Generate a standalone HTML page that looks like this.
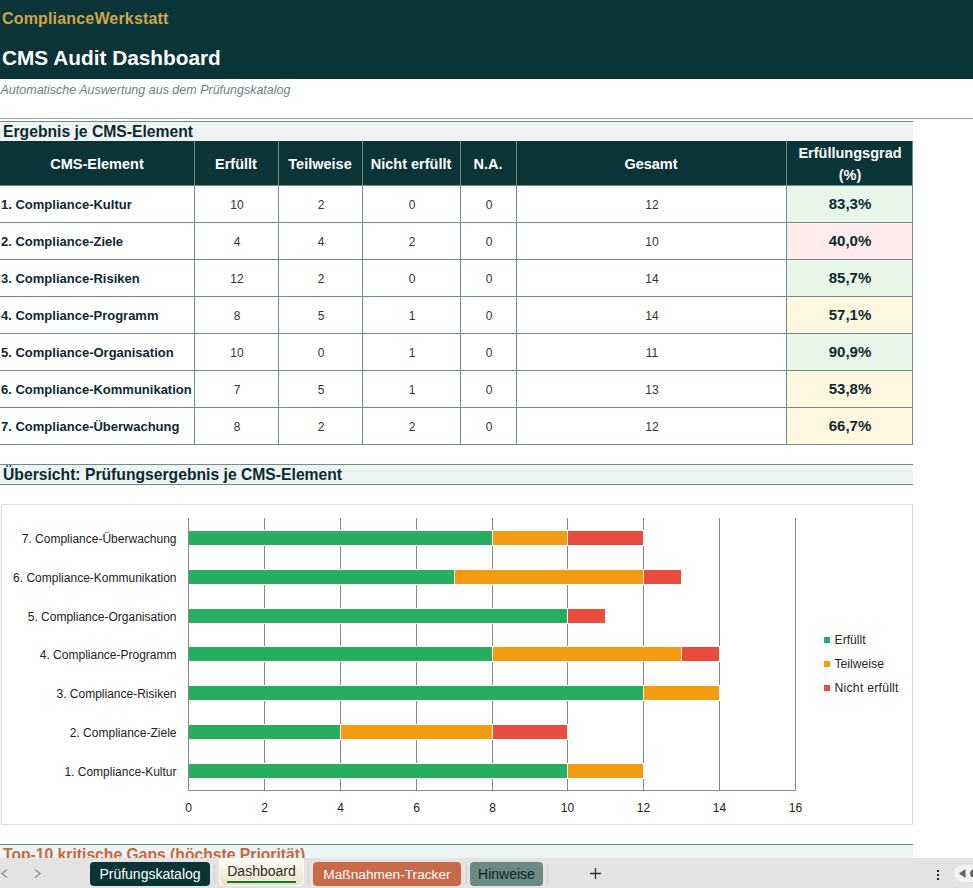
<!DOCTYPE html>
<html><head><meta charset="utf-8"><style>
html,body{margin:0;padding:0;width:973px;height:888px;overflow:hidden;background:#fff;font-family:"Liberation Sans", sans-serif;}
.t{position:absolute;white-space:nowrap;line-height:1;}
.r{position:absolute;}
</style></head><body>
<div class="r" style="left:0px;top:0px;width:973px;height:79px;background:#0a3437"></div><div class="t" style="left:2px;top:11px;font-size:16px;font-weight:bold;color:#cfa64a;letter-spacing:0.17px">ComplianceWerkstatt</div><div class="t" style="left:2px;top:48px;font-size:20.8px;font-weight:bold;color:#fff">CMS Audit Dashboard</div><div class="t" style="left:0.5px;top:84px;font-size:12.5px;font-style:italic;color:#6f8083">Automatische Auswertung aus dem Prüfungskatalog</div><div class="r" style="left:0px;top:118px;width:973px;height:1px;background:#a0a0a0"></div><div class="r" style="left:0px;top:121px;width:913px;height:1px;background:#6f8e88"></div><div class="r" style="left:0px;top:122px;width:913px;height:19px;background:#eef4f4"></div><div class="t" style="left:3px;top:124px;font-size:15.7px;font-weight:bold;color:#0b2a30">Ergebnis je CMS-Element</div><div class="r" style="left:0px;top:141px;width:913px;height:44px;background:#0a3437"></div><div class="t" style="left:0px;top:157px;font-size:14.5px;width:194px;text-align:center;font-weight:bold;color:#fff">CMS-Element</div><div class="t" style="left:194px;top:157px;font-size:14.5px;width:84px;text-align:center;font-weight:bold;color:#fff">Erfüllt</div><div class="t" style="left:278px;top:157px;font-size:14.5px;width:84px;text-align:center;font-weight:bold;color:#fff">Teilweise</div><div class="t" style="left:362px;top:157px;font-size:14.5px;width:98px;text-align:center;font-weight:bold;color:#fff">Nicht erfüllt</div><div class="t" style="left:460px;top:157px;font-size:14.5px;width:56px;text-align:center;font-weight:bold;color:#fff">N.A.</div><div class="t" style="left:516px;top:157px;font-size:14.5px;width:270px;text-align:center;font-weight:bold;color:#fff">Gesamt</div><div class="t" style="left:787px;top:146px;font-size:14.5px;width:126px;text-align:center;font-weight:bold;color:#fff">Erfüllungsgrad</div><div class="t" style="left:787px;top:168px;font-size:14.5px;width:126px;text-align:center;font-weight:bold;color:#fff">(%)</div><div class="r" style="left:786px;top:185px;width:126px;height:37px;background:#e8f5e9"></div><div class="t" style="left:1px;top:198px;font-size:13px;font-weight:bold;color:#0b2a30">1. Compliance-Kultur</div><div class="t" style="left:195px;top:199px;font-size:12px;width:84px;text-align:center;color:#333">10</div><div class="t" style="left:279px;top:199px;font-size:12px;width:84px;text-align:center;color:#333">2</div><div class="t" style="left:363px;top:199px;font-size:12px;width:98px;text-align:center;color:#333">0</div><div class="t" style="left:461px;top:199px;font-size:12px;width:56px;text-align:center;color:#333">0</div><div class="t" style="left:517px;top:199px;font-size:12px;width:270px;text-align:center;color:#333">12</div><div class="t" style="left:787px;top:196px;font-size:15px;width:126px;text-align:center;font-weight:bold;color:#0b2a30">83,3%</div><div class="r" style="left:786px;top:222px;width:126px;height:37px;background:#ffebee"></div><div class="t" style="left:1px;top:235px;font-size:13px;font-weight:bold;color:#0b2a30">2. Compliance-Ziele</div><div class="t" style="left:195px;top:236px;font-size:12px;width:84px;text-align:center;color:#333">4</div><div class="t" style="left:279px;top:236px;font-size:12px;width:84px;text-align:center;color:#333">4</div><div class="t" style="left:363px;top:236px;font-size:12px;width:98px;text-align:center;color:#333">2</div><div class="t" style="left:461px;top:236px;font-size:12px;width:56px;text-align:center;color:#333">0</div><div class="t" style="left:517px;top:236px;font-size:12px;width:270px;text-align:center;color:#333">10</div><div class="t" style="left:787px;top:233px;font-size:15px;width:126px;text-align:center;font-weight:bold;color:#0b2a30">40,0%</div><div class="r" style="left:786px;top:259px;width:126px;height:37px;background:#e8f5e9"></div><div class="t" style="left:1px;top:272px;font-size:13px;font-weight:bold;color:#0b2a30">3. Compliance-Risiken</div><div class="t" style="left:195px;top:273px;font-size:12px;width:84px;text-align:center;color:#333">12</div><div class="t" style="left:279px;top:273px;font-size:12px;width:84px;text-align:center;color:#333">2</div><div class="t" style="left:363px;top:273px;font-size:12px;width:98px;text-align:center;color:#333">0</div><div class="t" style="left:461px;top:273px;font-size:12px;width:56px;text-align:center;color:#333">0</div><div class="t" style="left:517px;top:273px;font-size:12px;width:270px;text-align:center;color:#333">14</div><div class="t" style="left:787px;top:270px;font-size:15px;width:126px;text-align:center;font-weight:bold;color:#0b2a30">85,7%</div><div class="r" style="left:786px;top:296px;width:126px;height:37px;background:#fff8e1"></div><div class="t" style="left:1px;top:309px;font-size:13px;font-weight:bold;color:#0b2a30">4. Compliance-Programm</div><div class="t" style="left:195px;top:310px;font-size:12px;width:84px;text-align:center;color:#333">8</div><div class="t" style="left:279px;top:310px;font-size:12px;width:84px;text-align:center;color:#333">5</div><div class="t" style="left:363px;top:310px;font-size:12px;width:98px;text-align:center;color:#333">1</div><div class="t" style="left:461px;top:310px;font-size:12px;width:56px;text-align:center;color:#333">0</div><div class="t" style="left:517px;top:310px;font-size:12px;width:270px;text-align:center;color:#333">14</div><div class="t" style="left:787px;top:307px;font-size:15px;width:126px;text-align:center;font-weight:bold;color:#0b2a30">57,1%</div><div class="r" style="left:786px;top:333px;width:126px;height:37px;background:#e8f5e9"></div><div class="t" style="left:1px;top:346px;font-size:13px;font-weight:bold;color:#0b2a30">5. Compliance-Organisation</div><div class="t" style="left:195px;top:347px;font-size:12px;width:84px;text-align:center;color:#333">10</div><div class="t" style="left:279px;top:347px;font-size:12px;width:84px;text-align:center;color:#333">0</div><div class="t" style="left:363px;top:347px;font-size:12px;width:98px;text-align:center;color:#333">1</div><div class="t" style="left:461px;top:347px;font-size:12px;width:56px;text-align:center;color:#333">0</div><div class="t" style="left:517px;top:347px;font-size:12px;width:270px;text-align:center;color:#333">11</div><div class="t" style="left:787px;top:344px;font-size:15px;width:126px;text-align:center;font-weight:bold;color:#0b2a30">90,9%</div><div class="r" style="left:786px;top:370px;width:126px;height:37px;background:#fff8e1"></div><div class="t" style="left:1px;top:383px;font-size:13px;font-weight:bold;color:#0b2a30">6. Compliance-Kommunikation</div><div class="t" style="left:195px;top:384px;font-size:12px;width:84px;text-align:center;color:#333">7</div><div class="t" style="left:279px;top:384px;font-size:12px;width:84px;text-align:center;color:#333">5</div><div class="t" style="left:363px;top:384px;font-size:12px;width:98px;text-align:center;color:#333">1</div><div class="t" style="left:461px;top:384px;font-size:12px;width:56px;text-align:center;color:#333">0</div><div class="t" style="left:517px;top:384px;font-size:12px;width:270px;text-align:center;color:#333">13</div><div class="t" style="left:787px;top:381px;font-size:15px;width:126px;text-align:center;font-weight:bold;color:#0b2a30">53,8%</div><div class="r" style="left:786px;top:407px;width:126px;height:37px;background:#fff8e1"></div><div class="t" style="left:1px;top:420px;font-size:13px;font-weight:bold;color:#0b2a30">7. Compliance-Überwachung</div><div class="t" style="left:195px;top:421px;font-size:12px;width:84px;text-align:center;color:#333">8</div><div class="t" style="left:279px;top:421px;font-size:12px;width:84px;text-align:center;color:#333">2</div><div class="t" style="left:363px;top:421px;font-size:12px;width:98px;text-align:center;color:#333">2</div><div class="t" style="left:461px;top:421px;font-size:12px;width:56px;text-align:center;color:#333">0</div><div class="t" style="left:517px;top:421px;font-size:12px;width:270px;text-align:center;color:#333">12</div><div class="t" style="left:787px;top:418px;font-size:15px;width:126px;text-align:center;font-weight:bold;color:#0b2a30">66,7%</div><div class="r" style="left:0px;top:185px;width:913px;height:1px;background:#6f8e88"></div><div class="r" style="left:0px;top:222px;width:913px;height:1px;background:#6f8e88"></div><div class="r" style="left:0px;top:259px;width:913px;height:1px;background:#6f8e88"></div><div class="r" style="left:0px;top:296px;width:913px;height:1px;background:#6f8e88"></div><div class="r" style="left:0px;top:333px;width:913px;height:1px;background:#6f8e88"></div><div class="r" style="left:0px;top:370px;width:913px;height:1px;background:#6f8e88"></div><div class="r" style="left:0px;top:407px;width:913px;height:1px;background:#6f8e88"></div><div class="r" style="left:0px;top:444px;width:913px;height:1px;background:#6f8e88"></div><div class="r" style="left:194px;top:141px;width:1px;height:304px;background:#6f8e88"></div><div class="r" style="left:278px;top:141px;width:1px;height:304px;background:#6f8e88"></div><div class="r" style="left:362px;top:141px;width:1px;height:304px;background:#6f8e88"></div><div class="r" style="left:460px;top:141px;width:1px;height:304px;background:#6f8e88"></div><div class="r" style="left:516px;top:141px;width:1px;height:304px;background:#6f8e88"></div><div class="r" style="left:786px;top:141px;width:1px;height:304px;background:#6f8e88"></div><div class="r" style="left:912px;top:141px;width:1px;height:304px;background:#6f8e88"></div><div class="r" style="left:0px;top:464px;width:913px;height:1px;background:#6f8e88"></div><div class="r" style="left:0px;top:465px;width:913px;height:19px;background:#eef4f4"></div><div class="r" style="left:0px;top:484px;width:913px;height:1px;background:#6f8e88"></div><div class="t" style="left:3px;top:467px;font-size:15.7px;font-weight:bold;color:#0b2a30">Übersicht: Prüfungsergebnis je CMS-Element</div><div class="r" style="left:1px;top:504px;width:912px;height:321px;border:1px solid #d9d9d9;box-sizing:border-box;background:#fff"></div><div class="r" style="left:264px;top:518px;width:1px;height:273px;background:#888"></div><div class="r" style="left:340px;top:518px;width:1px;height:273px;background:#888"></div><div class="r" style="left:416px;top:518px;width:1px;height:273px;background:#888"></div><div class="r" style="left:492px;top:518px;width:1px;height:273px;background:#888"></div><div class="r" style="left:567px;top:518px;width:1px;height:273px;background:#888"></div><div class="r" style="left:643px;top:518px;width:1px;height:273px;background:#888"></div><div class="r" style="left:719px;top:518px;width:1px;height:273px;background:#888"></div><div class="r" style="left:795px;top:518px;width:1px;height:273px;background:#888"></div><div class="r" style="left:188px;top:530px;width:305px;height:16px;background:#fff"></div><div class="r" style="left:189px;top:531px;width:303px;height:14px;background:#27ae60"></div><div class="r" style="left:492px;top:530px;width:76px;height:16px;background:#fff"></div><div class="r" style="left:493px;top:531px;width:74px;height:14px;background:#f39c12"></div><div class="r" style="left:567px;top:530px;width:77px;height:16px;background:#fff"></div><div class="r" style="left:568px;top:531px;width:75px;height:14px;background:#e74c3c"></div><div class="r" style="left:188px;top:569px;width:267px;height:16px;background:#fff"></div><div class="r" style="left:189px;top:570px;width:265px;height:14px;background:#27ae60"></div><div class="r" style="left:454px;top:569px;width:190px;height:16px;background:#fff"></div><div class="r" style="left:455px;top:570px;width:188px;height:14px;background:#f39c12"></div><div class="r" style="left:643px;top:569px;width:39px;height:16px;background:#fff"></div><div class="r" style="left:644px;top:570px;width:37px;height:14px;background:#e74c3c"></div><div class="r" style="left:188px;top:608px;width:380px;height:16px;background:#fff"></div><div class="r" style="left:189px;top:609px;width:378px;height:14px;background:#27ae60"></div><div class="r" style="left:567px;top:608px;width:39px;height:16px;background:#fff"></div><div class="r" style="left:568px;top:609px;width:37px;height:14px;background:#e74c3c"></div><div class="r" style="left:188px;top:646px;width:305px;height:16px;background:#fff"></div><div class="r" style="left:189px;top:647px;width:303px;height:14px;background:#27ae60"></div><div class="r" style="left:492px;top:646px;width:190px;height:16px;background:#fff"></div><div class="r" style="left:493px;top:647px;width:188px;height:14px;background:#f39c12"></div><div class="r" style="left:681px;top:646px;width:39px;height:16px;background:#fff"></div><div class="r" style="left:682px;top:647px;width:37px;height:14px;background:#e74c3c"></div><div class="r" style="left:188px;top:685px;width:456px;height:16px;background:#fff"></div><div class="r" style="left:189px;top:686px;width:454px;height:14px;background:#27ae60"></div><div class="r" style="left:643px;top:685px;width:77px;height:16px;background:#fff"></div><div class="r" style="left:644px;top:686px;width:75px;height:14px;background:#f39c12"></div><div class="r" style="left:188px;top:724px;width:153px;height:16px;background:#fff"></div><div class="r" style="left:189px;top:725px;width:151px;height:14px;background:#27ae60"></div><div class="r" style="left:340px;top:724px;width:153px;height:16px;background:#fff"></div><div class="r" style="left:341px;top:725px;width:151px;height:14px;background:#f39c12"></div><div class="r" style="left:492px;top:724px;width:76px;height:16px;background:#fff"></div><div class="r" style="left:493px;top:725px;width:74px;height:14px;background:#e74c3c"></div><div class="r" style="left:188px;top:763px;width:380px;height:16px;background:#fff"></div><div class="r" style="left:189px;top:764px;width:378px;height:14px;background:#27ae60"></div><div class="r" style="left:567px;top:763px;width:77px;height:16px;background:#fff"></div><div class="r" style="left:568px;top:764px;width:75px;height:14px;background:#f39c12"></div><div class="r" style="left:188px;top:518px;width:1px;height:273px;background:#888"></div><div class="r" style="left:188px;top:790px;width:608px;height:1px;background:#888"></div><div class="t" style="left:0px;top:533px;font-size:12px;width:176.5px;text-align:right;color:#222">7. Compliance-Überwachung</div><div class="t" style="left:0px;top:572px;font-size:12px;width:176.5px;text-align:right;color:#222">6. Compliance-Kommunikation</div><div class="t" style="left:0px;top:611px;font-size:12px;width:176.5px;text-align:right;color:#222">5. Compliance-Organisation</div><div class="t" style="left:0px;top:649px;font-size:12px;width:176.5px;text-align:right;color:#222">4. Compliance-Programm</div><div class="t" style="left:0px;top:688px;font-size:12px;width:176.5px;text-align:right;color:#222">3. Compliance-Risiken</div><div class="t" style="left:0px;top:727px;font-size:12px;width:176.5px;text-align:right;color:#222">2. Compliance-Ziele</div><div class="t" style="left:0px;top:766px;font-size:12px;width:176.5px;text-align:right;color:#222">1. Compliance-Kultur</div><div class="t" style="left:168px;top:802px;font-size:12px;width:41px;text-align:center;color:#222">0</div><div class="t" style="left:244px;top:802px;font-size:12px;width:41px;text-align:center;color:#222">2</div><div class="t" style="left:320px;top:802px;font-size:12px;width:41px;text-align:center;color:#222">4</div><div class="t" style="left:396px;top:802px;font-size:12px;width:41px;text-align:center;color:#222">6</div><div class="t" style="left:472px;top:802px;font-size:12px;width:41px;text-align:center;color:#222">8</div><div class="t" style="left:547px;top:802px;font-size:12px;width:41px;text-align:center;color:#222">10</div><div class="t" style="left:623px;top:802px;font-size:12px;width:41px;text-align:center;color:#222">12</div><div class="t" style="left:699px;top:802px;font-size:12px;width:41px;text-align:center;color:#222">14</div><div class="t" style="left:775px;top:802px;font-size:12px;width:41px;text-align:center;color:#222">16</div><div class="r" style="left:824px;top:637px;width:6px;height:6px;background:#27ae60"></div><div class="t" style="left:834.5px;top:634px;font-size:12.2px;color:#262626">Erfüllt</div><div class="r" style="left:824px;top:661px;width:6px;height:6px;background:#f39c12"></div><div class="t" style="left:834.5px;top:658px;font-size:12.2px;color:#262626">Teilweise</div><div class="r" style="left:824px;top:685px;width:6px;height:6px;background:#e74c3c"></div><div class="t" style="left:834.5px;top:682px;font-size:12.2px;color:#262626;letter-spacing:0.25px">Nicht erfüllt</div><div class="r" style="left:0px;top:844px;width:913px;height:1px;background:#6f8e88"></div><div class="r" style="left:0px;top:845px;width:913px;height:13px;background:#eef4f4"></div><div class="t" style="left:3px;top:847px;font-size:15.7px;font-weight:bold;color:#c8663e">Top-10 kritische Gaps (höchste Priorität)</div><div class="r" style="left:0px;top:858px;width:973px;height:30px;background:#e3e3e3"></div><div class="r" style="left:90px;top:862px;width:120px;height:24px;background:#0a3437;border-radius:4px"></div><div class="t" style="left:90px;top:867px;font-size:14px;width:120px;text-align:center;color:#fff">Prüfungskatalog</div><div class="r" style="left:214px;top:864px;width:1px;height:20px;background:#cfcfcf"></div><div class="r" style="left:219px;top:858px;width:85px;height:28px;background:#fff;border-radius:0 0 6px 6px"></div><div class="r" style="left:220px;top:859px;width:83px;height:26px;background:linear-gradient(#fdfcf9,#eee1c2);border-radius:0 0 5px 5px"></div><div class="t" style="left:220px;top:864px;font-size:14px;width:83px;text-align:center;color:#2b2b2b">Dashboard</div><div class="r" style="left:227px;top:881px;width:69px;height:2px;background:#107c41"></div><div class="r" style="left:308px;top:864px;width:1px;height:20px;background:#cfcfcf"></div><div class="r" style="left:313px;top:862px;width:148px;height:24px;background:#c8694a;border-radius:4px"></div><div class="t" style="left:313px;top:868px;font-size:13.7px;width:148px;text-align:center;color:#fff">Maßnahmen-Tracker</div><div class="r" style="left:466px;top:864px;width:1px;height:20px;background:#cfcfcf"></div><div class="r" style="left:470px;top:862px;width:73px;height:24px;background:#6b8a84;border-radius:4px"></div><div class="t" style="left:470px;top:867px;font-size:14px;width:73px;text-align:center;color:#102020">Hinweise</div><div class="r" style="left:547px;top:864px;width:1px;height:20px;background:#cfcfcf"></div><svg class="r" style="left:0;top:0" width="973" height="888"><polyline points="7,869.5 2,873.5 7,877.5" fill="none" stroke="#8a8a8a" stroke-width="1.2"/><polyline points="35,869.5 40,873.5 35,877.5" fill="none" stroke="#8a8a8a" stroke-width="1.2"/><path d="M590 873.5 H601 M595.5 868 V879" stroke="#333" stroke-width="1.3" fill="none"/></svg><div class="r" style="left:937px;top:870px;width:2px;height:2px;background:#222"></div><div class="r" style="left:937px;top:874px;width:2px;height:2px;background:#222"></div><div class="r" style="left:937px;top:878px;width:2px;height:2px;background:#222"></div><div class="r" style="left:954px;top:865px;width:30px;height:17px;background:#f4f4f4;border-radius:9px"></div><svg class="r" style="left:958px;top:868px" width="15" height="12"><path d="M1 5.5 L7.5 1 L7.5 10 Z" fill="#666"/><circle cx="16" cy="5.5" r="4" fill="#666"/></svg>
</body></html>
